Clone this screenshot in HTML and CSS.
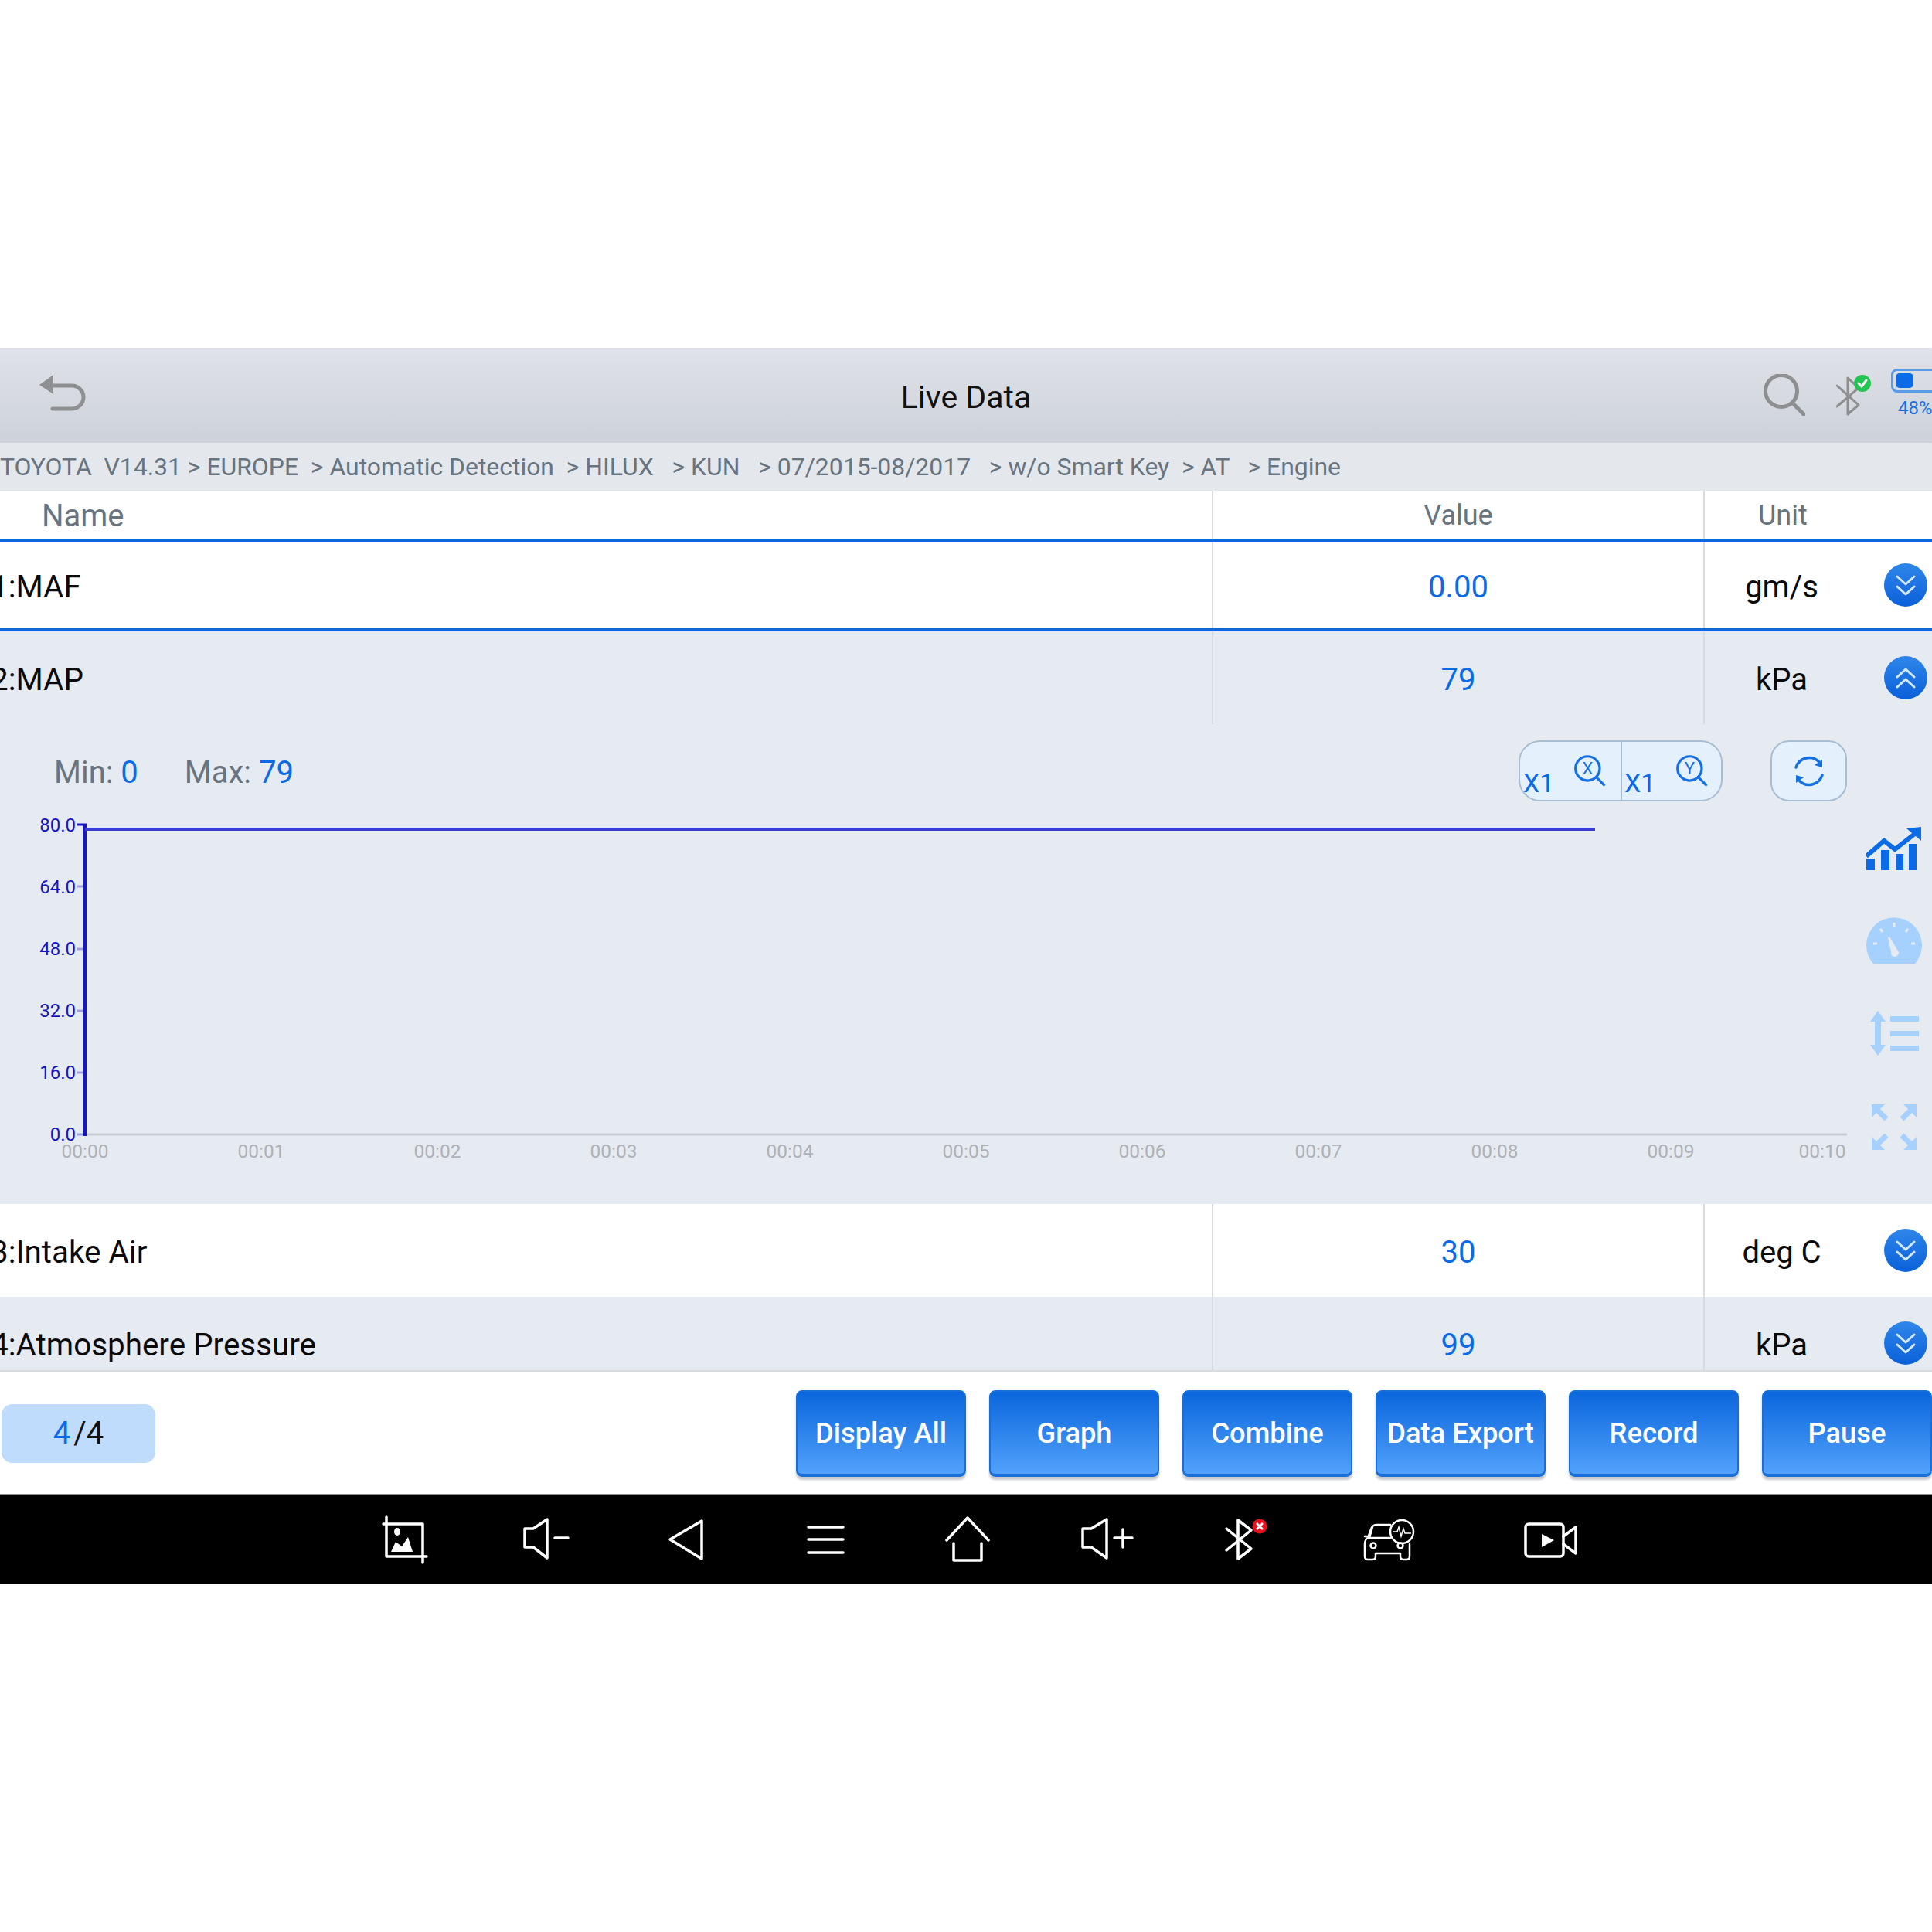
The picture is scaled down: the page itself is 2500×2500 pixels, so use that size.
FILE: index.html
```html
<!DOCTYPE html>
<html lang="en">
<head>
<meta charset="utf-8">
<title>Live Data</title>
<link rel="stylesheet" href="styles.css">
</head>
<body>
<main class="screen">
  <header class="topbar">
    <div class="topbar-left">
      <svg class="icon-back" viewBox="0 0 62 48"><path class="stroke-grey" d="M16 14H42A15 15 0 0 1 42 44H17"/><path class="fill-grey" d="M0 13L18 0V25Z"/></svg>
    </div>
    <h1 class="title">Live Data</h1>
    <div class="topbar-right">
      <svg class="icon-search" viewBox="0 0 54 54"><circle class="stroke-grey" cx="23" cy="22" r="20.5"/><path class="stroke-grey" d="M38 38L52 52"/></svg>
      <svg class="icon-bt" viewBox="0 0 48 56"><path class="stroke-grey thin" d="M1 15L29 40L15 52V5L29 18L1 42"/><circle class="fill-green" cx="34" cy="12" r="11"/><path class="stroke-white" d="M29 12L33 16L39 8"/></svg>
      <div class="battery">
        <div class="battery-shell"><div class="battery-fill"></div></div>
        <div class="battery-text">48%</div>
      </div>
    </div>
  </header>

  <nav class="crumbs">TOYOTA  V14.31 &gt; EUROPE  &gt; Automatic Detection  &gt; HILUX   &gt; KUN   &gt; 07/2015-08/2017   &gt; w/o Smart Key  &gt; AT   &gt; Engine</nav>

  <div class="table-head">
    <div class="th th-name">Name</div>
    <div class="th th-value">Value</div>
    <div class="th th-unit">Unit</div>
  </div>

  <section class="rows">
    <div class="row row-first">
      <div class="cell cell-name">1:MAF</div>
      <div class="cell cell-value">0.00</div>
      <div class="cell cell-unit">gm/s</div>
      <div class="cell-action"><svg class="round" viewBox="0 0 56 56"><path class="chev" d="M17 17L28 27L39 17M17 30L28 40L39 30"/></svg></div>
    </div>

    <div class="row row-alt">
      <div class="cell cell-name">2:MAP</div>
      <div class="cell cell-value">79</div>
      <div class="cell cell-unit">kPa</div>
      <div class="cell-action"><svg class="round" viewBox="0 0 56 56"><path class="chev" d="M17 27L28 17L39 27M17 40L28 30L39 40"/></svg></div>
    </div>

    <div class="panel">
      <div class="panel-top">
        <div class="minmax"><span class="mm-label">Min: </span><span class="mm-val">0</span><span class="mm-label mm-gap">Max: </span><span class="mm-val">79</span></div>
        <div class="zoom-group">
          <div class="zoom-half">
            <span class="zoom-text">X1</span>
            <svg class="zoom-mag" viewBox="0 0 50 50"><circle class="stroke-blue" cx="21" cy="20" r="17"/><path class="stroke-blue" d="M33 32L44 43"/><text class="mag-letter" x="21" y="28">X</text></svg>
          </div>
          <div class="zoom-half zoom-half-right">
            <span class="zoom-text">X1</span>
            <svg class="zoom-mag" viewBox="0 0 50 50"><circle class="stroke-blue" cx="21" cy="20" r="17"/><path class="stroke-blue" d="M33 32L44 43"/><text class="mag-letter" x="21" y="28">Y</text></svg>
          </div>
        </div>
        <div class="refresh">
          <svg class="refresh-icon" viewBox="0 0 44 44"><path class="stroke-blue" d="M5 17A18 18 0 0 1 35 10"/><path class="stroke-blue" d="M39 27A18 18 0 0 1 9 34"/><path class="fill-blue" d="M39 7V17L29 14Z"/><path class="fill-blue" d="M5 37V27L15 30Z"/></svg>
        </div>
      </div>
      <div class="chart-row">
        <svg class="chart" viewBox="0 1050 2400 460">
          <path class="tick-dark" d="M100 1067H112"/>
          <path class="tick" d="M100 1147H108M100 1228H108M100 1308H108M100 1388H108M100 1468H108"/>
          <path class="x-axis" d="M110 1468H2390"/>
          <path class="y-axis" d="M110 1067V1470"/>
          <path class="data-line" d="M110 1073H2064"/>
          <g class="y-labels">
            <text x="98" y="1076">80.0</text>
            <text x="98" y="1156">64.0</text>
            <text x="98" y="1236">48.0</text>
            <text x="98" y="1316">32.0</text>
            <text x="98" y="1396">16.0</text>
            <text x="98" y="1476">0.0</text>
          </g>
          <g class="x-labels">
            <text x="110" y="1498">00:00</text>
            <text x="338" y="1498">00:01</text>
            <text x="566" y="1498">00:02</text>
            <text x="794" y="1498">00:03</text>
            <text x="1022" y="1498">00:04</text>
            <text x="1250" y="1498">00:05</text>
            <text x="1478" y="1498">00:06</text>
            <text x="1706" y="1498">00:07</text>
            <text x="1934" y="1498">00:08</text>
            <text x="2162" y="1498">00:09</text>
            <text x="2358" y="1498">00:10</text>
          </g>
        </svg>
        <div class="side-icons">
          <svg class="side side-trend" viewBox="0 0 72 57"><path class="bar" d="M0 41H11V56H0ZM19 30H30V56H19ZM38 35H48V56H38ZM55 22H65V56H55Z"/><path class="trend" d="M0 38L23 18L37 29L64 8"/><path class="bar" d="M52 2L71 0V18Z"/></svg>
          <svg class="side" viewBox="0 0 72 60"><path class="light" d="M9 60A36 36 0 1 1 63 60Z"/><path class="gauge-mark" d="M36 7V13M18 15L21 19M54 15L51 19M9 34H14M58 34H63"/><path class="gauge-needle" d="M28 26L30 25L40 42A5 5 0 1 1 32 45Z"/></svg>
          <svg class="side" viewBox="-5 -1 72 60"><path class="light" d="M10 0L20 14H14V44H20L10 58L0 44H6V14H0Z"/><path class="light" d="M26 7H63V14H26ZM26 26H63V33H26ZM26 45H63V52H26Z"/></svg>
          <svg class="side side-expand" viewBox="0 -2 72 62"><g class="light"><path d="M7 0H24L7 17ZM65 0H48L65 17ZM7 59H24L7 42ZM65 59H48L65 42Z"/></g><path class="light-line" d="M12 5L26 19M60 5L46 19M12 54L26 40M60 54L46 40"/></svg>
        </div>
      </div>
    </div>

    <div class="row">
      <div class="cell cell-name">3:Intake Air</div>
      <div class="cell cell-value">30</div>
      <div class="cell cell-unit">deg C</div>
      <div class="cell-action"><svg class="round" viewBox="0 0 56 56"><path class="chev" d="M17 17L28 27L39 17M17 30L28 40L39 30"/></svg></div>
    </div>

    <div class="row row-alt">
      <div class="cell cell-name">4:Atmosphere Pressure</div>
      <div class="cell cell-value">99</div>
      <div class="cell cell-unit">kPa</div>
      <div class="cell-action"><svg class="round" viewBox="0 0 56 56"><path class="chev" d="M17 17L28 27L39 17M17 30L28 40L39 30"/></svg></div>
    </div>
  </section>

  <footer class="actions">
    <div class="pager"><span class="pager-cur">4</span>/4</div>
    <div class="buttons">
      <button class="btn">Display All</button>
      <button class="btn">Graph</button>
      <button class="btn">Combine</button>
      <button class="btn">Data Export</button>
      <button class="btn">Record</button>
      <button class="btn">Pause</button>
    </div>
  </footer>

  <nav class="sysbar">
    <svg class="sys" viewBox="0 0 90 80"><path class="sys-line" d="M21 11V62H68V20H17M68 62H73M68 62V70"/><path class="sys-fill" d="M27 56L33 43L41 49L49 37L55 56Z"/><ellipse class="sys-fill" cx="35" cy="30" rx="4" ry="5"/></svg>
    <svg class="sys" viewBox="-1 0 90 80"><path class="sys-line" d="M18 26H29L47 14V64L29 50H18ZM57 38H74"/></svg>
    <svg class="sys" viewBox="-2 0 90 80"><path class="sys-line" d="M24 40L65 16V65Z"/></svg>
    <svg class="sys" viewBox="-1 0 90 80"><path class="sys-line" d="M23 24H68M23 40H68M23 57H68"/></svg>
    <svg class="sys" viewBox="-4 0 90 80"><path class="sys-line" d="M18 41L45 12L72 41M27 45V67H63V45"/></svg>
    <svg class="sys" viewBox="-3 0 90 80"><path class="sys-line" d="M14 26H25L45 14V64L25 50H14ZM55 38H78M66 27V50"/></svg>
    <svg class="sys" viewBox="5 0 90 80"><path class="sys-line" d="M27 26L59 52L42 65V15L59 28L27 54"/><circle class="sys-red" cx="70" cy="23" r="9.5"/><path class="sys-x" d="M66 19L74 27M74 19L66 27"/></svg>
    <svg class="sys" viewBox="-6 0 90 80"><path class="sys-thin" d="M47 21H29Q24 21 22 27L18 38Q14 40 14 46V62Q14 66 18 66H24Q28 66 28 62V58H60V62Q60 66 64 66H68Q72 66 72 62V46M20 38H47M14 36H18M24 24L20 38"/><circle class="sys-thin" cx="25" cy="48" r="3.5"/><circle class="sys-thin" cx="60" cy="48" r="3.5"/><circle class="sys-thin" cx="62" cy="30" r="15"/><path class="sys-hair" d="M50 30H56L58 24L61 36L64 26L66 32H74"/></svg>
    <svg class="sys sys-last" viewBox="0 0 90 80"><rect class="sys-line" x="13" y="20" width="49" height="42" rx="4"/><path class="sys-line" d="M62 36L78 24V58L62 46"/><path class="sys-fill" d="M34 33L50 41L34 50Z"/></svg>
  </nav>
</main>
</body>
</html>
```

FILE: styles.css
```css
* { box-sizing: border-box; }

html, body {
  margin: 0;
  padding: 0;
  background: #fff;
}

body {
  width: 2500px;
  height: 2500px;
  overflow: hidden;
  font-family: Roboto, "Liberation Sans", sans-serif;
}

.screen {
  margin-top: 450px;
  width: 2500px;
  overflow: hidden;
  display: flex;
  flex-direction: column;
}

/* top bar */
.topbar {
  height: 123px;
  flex: none;
  display: grid;
  grid-template-columns: 1fr auto 1fr;
  align-items: center;
  background: linear-gradient(#dfe2e8, #cdd1d9);
}

.topbar-left { padding-left: 51px; display: flex; }
.icon-back { width: 62px; height: 48px; margin-top: -6px; }

.title {
  margin: 4px 0 0;
  font-size: 41px;
  font-weight: 400;
  color: #111;
}

.topbar-right {
  display: flex;
  justify-content: flex-end;
  align-items: flex-start;
  margin-right: -27px;
  padding-bottom: 4px;
}

.icon-search { width: 54px; height: 54px; margin-top: 7px; }
.icon-bt { width: 48px; height: 56px; margin: 7px 0 0 40px; }

.battery { width: 80px; margin-left: 23px; flex: none; }
.battery-shell {
  width: 80px;
  height: 31px;
  border: 3px solid #5a9ae8;
  border-radius: 8px;
  padding: 3px;
}
.battery-fill {
  width: 23px;
  height: 19px;
  background: #0b6be6;
  border-radius: 5px;
}
.battery-text {
  margin: 6px 0 0 9px;
  font-size: 24px;
  line-height: 28px;
  color: #1a70e0;
}

.stroke-grey { fill: none; stroke: #8e8f90; stroke-width: 5; stroke-linecap: round; }
.stroke-grey.thin { stroke-width: 3; stroke-linejoin: round; }
.fill-grey { fill: #8e8f90; }
.fill-green { fill: #22c452; }
.stroke-white { fill: none; stroke: #fff; stroke-width: 3; stroke-linecap: round; }

/* breadcrumb */
.crumbs {
  height: 62px;
  flex: none;
  display: flex;
  align-items: center;
  background: #e4e7ec;
  color: #687480;
  font-size: 31.9px;
  white-space: pre;
}

/* table */
.table-head {
  height: 66px;
  flex: none;
  display: grid;
  grid-template-columns: 1568px 636px 296px;
  background: #fff;
  border-bottom: 4px solid #0d66e0;
}

.th {
  display: flex;
  align-items: center;
  color: #687480;
  font-size: 36px;
  padding-top: 2px;
}
.th-name { padding-left: 54px; font-size: 40px; }
.th-value { justify-content: center; border-left: 2px solid #d8dbe0; }
.th-unit { padding-left: 69px; border-left: 2px solid #d8dbe0; }

.rows {
  height: 1072px;
  flex: none;
  overflow: hidden;
}

.row {
  height: 120px;
  display: grid;
  grid-template-columns: 1568px 636px 201px 95px;
  background: #fff;
}
.row-first {
  height: 116px;
  border-bottom: 4px solid #0d66e0;
}
.row-alt { background: #e6ebf2; }

.cell {
  display: flex;
  align-items: center;
  font-size: 40px;
  color: #0a0a0a;
  padding-top: 4px;
}
.cell-name { margin-left: -12px; white-space: nowrap; font-size: 40.4px; }
.cell-value {
  justify-content: center;
  color: #0b6be6;
  border-left: 2px solid #d8dbe0;
}
.cell-unit {
  justify-content: center;
  border-left: 2px solid #d8dbe0;
}
.cell-action { display: flex; align-items: center; padding-left: 33px; }

.round {
  width: 56px;
  height: 56px;
  display: block;
  border-radius: 50%;
  background: linear-gradient(#2f86ea, #0a60d8);
}
.chev { fill: none; stroke: #d6e8ff; stroke-width: 3; stroke-linecap: round; stroke-linejoin: round; }

/* expanded panel */
.panel {
  height: 621px;
  background: #e6ebf2;
  padding-top: 21px;
}

.panel-top {
  height: 79px;
  display: flex;
  align-items: center;
  padding-left: 70px;
}

.minmax { font-size: 40px; width: 1895px; padding-top: 4px; white-space: pre; }
.mm-label { color: #687480; }
.mm-val { color: #0b6be6; }
.mm-gap { margin-left: 60px; }

.zoom-group {
  width: 264px;
  height: 79px;
  display: flex;
  background: #e4f0fb;
  border: 2px solid #a9bdd2;
  border-radius: 28px;
}

.zoom-half {
  width: 130px;
  flex: none;
  position: relative;
  display: flex;
  padding-left: 4px;
}
.zoom-half-right { border-left: 2px solid #a9bdd2; padding-left: 3px; }

.zoom-text {
  font-size: 34px;
  line-height: 34px;
  margin-top: 36px;
  color: #0b6be6;
}

.zoom-mag {
  width: 46px;
  height: 46px;
  position: absolute;
  left: 68px;
  top: 16px;
}

.stroke-blue { fill: none; stroke: #1470e4; stroke-width: 3.5; stroke-linecap: round; }
.fill-blue { fill: #1470e4; }
.mag-letter { font-size: 24px; fill: #1470e4; text-anchor: middle; }

.refresh {
  width: 99px;
  height: 79px;
  margin-left: 62px;
  display: flex;
  align-items: center;
  justify-content: center;
  background: #e4f0fb;
  border: 2px solid #a9bdd2;
  border-radius: 24px;
}
.refresh-icon { width: 44px; height: 44px; }

.chart-row {
  display: flex;
  margin-top: 13px;
}

.chart { width: 2400px; height: 460px; flex: none; display: block; }
.y-axis { stroke: #1616c8; stroke-width: 4; fill: none; }
.x-axis { stroke: #c7ccd4; stroke-width: 3; fill: none; }
.data-line { stroke: #3a3ad6; stroke-width: 4; fill: none; }
.tick { stroke: #9d9de2; stroke-width: 3; fill: none; }
.tick-dark { stroke: #1616c8; stroke-width: 3; fill: none; }
.y-labels text { font-size: 24px; fill: #1616c0; text-anchor: end; }
.x-labels text { font-size: 24.5px; fill: #aeb2b8; text-anchor: middle; }

.side-icons {
  display: flex;
  flex-direction: column;
  gap: 60px;
  padding: 20px 0 0 15px;
  flex: none;
}
.side { width: 72px; height: 60px; display: block; }
.side-trend { height: 57px; }
.side-expand { height: 62px; }
.bar { fill: #0b6be6; }
.trend { fill: none; stroke: #0b6be6; stroke-width: 6; }
.light { fill: #a6d0fd; }
.light-line { stroke: #a6d0fd; stroke-width: 7; fill: none; }
.gauge-mark { stroke: #e6ebf2; stroke-width: 3; fill: none; }
.gauge-needle { fill: #e6ebf2; }

/* footer */
.actions {
  height: 161px;
  flex: none;
  display: flex;
  align-items: center;
  justify-content: space-between;
  background: #fff;
  border-top: 3px solid #d9dbdf;
  border-bottom: 1px solid #8a8a8a;
  padding-left: 2px;
}

.pager {
  width: 199px;
  height: 76px;
  display: flex;
  align-items: center;
  justify-content: center;
  background: #bfdcfd;
  border-radius: 14px;
  font-size: 40px;
  color: #111;
}
.pager-cur { color: #0b6be6; margin-right: 4px; }

.buttons { display: flex; gap: 30px; }

.btn {
  width: 220px;
  height: 112px;
  padding: 2px 0 0;
  border: 2px solid #1a6ed8;
  border-bottom-width: 4px;
  border-radius: 8px;
  background: linear-gradient(#0a66dc, #52a2fc);
  box-shadow: 0 4px 3px #c6c8cc;
  color: #fff;
  font-family: inherit;
  font-size: 36.3px;
  font-weight: 500;
}

/* system bar */
.sysbar {
  height: 116px;
  flex: none;
  display: flex;
  align-items: center;
  background: #000;
  padding-left: 479px;
}

.sys { width: 90px; height: 80px; flex: none; margin-right: 91px; }
.sys-last { margin-left: 34px; }
.sys-line { fill: none; stroke: #fff; stroke-width: 3.5; stroke-linecap: round; stroke-linejoin: round; }
.sys-thin { fill: none; stroke: #fff; stroke-width: 2.5; stroke-linecap: round; stroke-linejoin: round; }
.sys-hair { fill: none; stroke: #fff; stroke-width: 1.5; }
.sys-fill { fill: #fff; }
.sys-red { fill: #e8101c; }
.sys-x { stroke: #fff; stroke-width: 2.5; fill: none; }
```
